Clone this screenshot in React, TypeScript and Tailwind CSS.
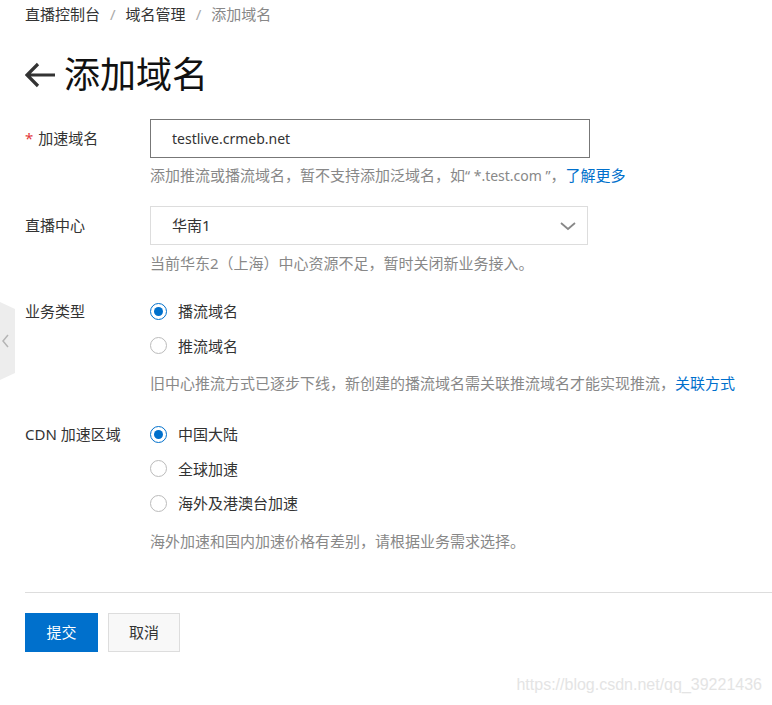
import React from "react";

const font = { fontFamily: '"Segoe UI", "Noto Sans", "Noto Sans CJK SC", sans-serif' };

const Radio = ({ checked, label }: { checked?: boolean; label: string }) => (
  <div className="flex items-center h-[34.5px]">
    {checked ? (
      <span className="w-[17px] h-[17px] rounded-full border-[1.5px] border-[#0070cc] flex items-center justify-center">
        <span className="w-[9px] h-[9px] rounded-full bg-[#0070cc]" />
      </span>
    ) : (
      <span className="w-[17px] h-[17px] rounded-full border border-[#bbb] bg-white" />
    )}
    <span className="ml-[11px] text-[#333]">{label}</span>
  </div>
);

const Help = ({ children, className = "" }: { children: React.ReactNode; className?: string }) => (
  <p className={`h-[20px] leading-[20px] text-[#888] ${className}`}>{children}</p>
);

const App = () => {
  return (
    <div className="relative w-[772px] h-[705px] bg-white overflow-hidden text-[15px]" style={font}>
      {/* Side tab */}
      <div className="absolute left-0 top-[302px] w-[15px] h-[78px] bg-[#ededed] [clip-path:polygon(0_0,100%_9%,100%_91%,0_100%)] flex items-center">
        <svg width="9" height="16" viewBox="0 0 9 16" className="ml-[1px]">
          <path d="M7 2 L2 8 L7 14" fill="none" stroke="#b5b5b5" strokeWidth="1.5" />
        </svg>
      </div>

      <div className="pl-[25px] pt-[4px]">
        {/* Breadcrumb */}
        <div className="flex items-center h-[20px] text-[#333]">
          <span>直播控制台</span>
          <span className="mx-[10px] text-[#aaa]">/</span>
          <span>域名管理</span>
          <span className="mx-[10px] text-[#aaa]">/</span>
          <span className="text-[#888]">添加域名</span>
        </div>

        {/* Title */}
        <div className="flex items-center h-[44px] mt-[29px]">
          <svg width="31" height="26" viewBox="0 0 31 26">
            <path d="M13 2 L2 13 L13 24 M2 13 L30 13" fill="none" stroke="#333" strokeWidth="3.2" />
          </svg>
          <h1 className="ml-[8px] text-[36px] text-[#111] leading-[44px]">添加域名</h1>
        </div>

        {/* 加速域名 */}
        <div className="flex mt-[22px]">
          <div className="w-[125px] h-[39px] flex items-center text-[#333]">
            <span className="text-[#e4393c] mr-[5px]">*</span>加速域名
          </div>
          <div>
            <div className="w-[440px] h-[39px] border border-[#777] flex items-center pl-[21px] text-[14px] text-[#333]">
              testlive.crmeb.net
            </div>
            <Help className="mt-[7px]">
              添加推流或播流域名，暂不支持添加泛域名，如<span className="text-[14px]">“ *.test.com ”</span>，
              <span className="text-[#0070cc]">了解更多</span>
            </Help>
          </div>
        </div>

        {/* 直播中心 */}
        <div className="flex mt-[21px]">
          <div className="w-[125px] h-[39px] flex items-center text-[#333]">直播中心</div>
          <div>
            <div className="w-[438px] h-[39px] border border-[#ddd] flex items-center justify-between pl-[21px] pr-[10px] text-[#333]">
              <span>华南1</span>
              <svg width="18" height="10" viewBox="0 0 18 10">
                <path d="M2 2 L9 8 L16 2" fill="none" stroke="#888" strokeWidth="1.8" />
              </svg>
            </div>
            <Help className="mt-[8px]">当前华东2（上海）中心资源不足，暂时关闭新业务接入。</Help>
          </div>
        </div>

        {/* 业务类型 */}
        <div className="flex mt-[21px]">
          <div className="w-[125px] h-[34.5px] flex items-center text-[#333]">业务类型</div>
          <div>
            <Radio checked label="播流域名" />
            <Radio label="推流域名" />
            <Help className="mt-[10px]">
              旧中心推流方式已逐步下线，新创建的播流域名需关联推流域名才能实现推流，
              <span className="text-[#0070cc]">关联方式</span>
            </Help>
          </div>
        </div>

        {/* CDN 加速区域 */}
        <div className="flex mt-[24px]">
          <div className="w-[125px] h-[34.5px] flex items-center text-[#333]">CDN 加速区域</div>
          <div>
            <Radio checked label="中国大陆" />
            <Radio label="全球加速" />
            <Radio label="海外及港澳台加速" />
            <Help className="mt-[10px]">海外加速和国内加速价格有差别，请根据业务需求选择。</Help>
          </div>
        </div>

        <hr className="mt-[41px] border-0 h-px bg-[#ddd]" />

        {/* Buttons */}
        <div className="flex gap-[10px] mt-[20px]">
          <button className="w-[73px] h-[39px] bg-[#0070cc] text-white">提交</button>
          <button className="w-[72px] h-[39px] border border-[#ddd] bg-[#f8f8f8] text-[#333]">取消</button>
        </div>
      </div>

      {/* Watermark */}
      <div className="absolute right-[10px] bottom-[8px] text-[16px] text-[#e4e4e4]" style={{ fontFamily: '"Liberation Sans", Arial, sans-serif' }}>
        https://blog.csdn.net/qq_39221436
      </div>
    </div>
  );
};

export default App;
